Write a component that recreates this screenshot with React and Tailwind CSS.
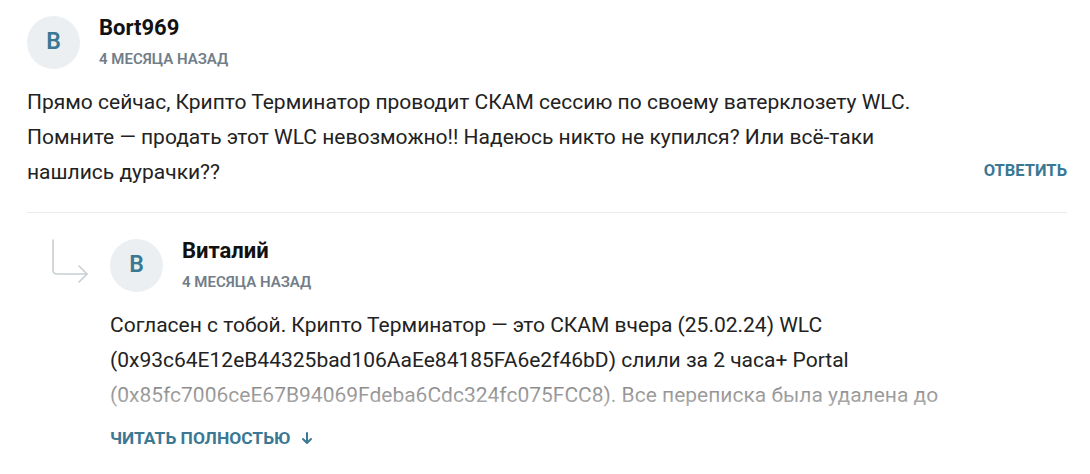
const Avatar = ({ letter }) => (
  <div className="w-[53px] h-[53px] shrink-0 rounded-full bg-[#eceff2] flex items-center justify-center">
    <span className="text-[23px] font-semibold text-[#3b7893]">{letter}</span>
  </div>
);

const Author = ({ name, date }) => (
  <div className="flex items-center">
    <Avatar letter="B" />
    <div className="ml-[19px] flex flex-col">
      <span className="text-[22px] leading-[26px] font-bold text-[#111]">{name}</span>
      <span className="mt-2 text-[15px] leading-[20px] font-semibold text-[#717d88]">
        {date}
      </span>
    </div>
  </div>
);

const ReplyArrow = () => (
  <svg width="40" height="46" viewBox="0 0 40 46" fill="none" stroke="#c8ced2" strokeWidth="1.6" strokeLinecap="round" strokeLinejoin="round">
    <path d="M2 1v30q0 4 4 4h30" />
    <path d="M28 27l8 8-8 8" />
  </svg>
);

export default function App() {
  return (
    <div className="w-[1090px] h-[474px] overflow-hidden bg-white pl-[27px] pr-[23px] pt-[15px] font-['Roboto',sans-serif] text-[#222]">
      <div className="pb-[22px] border-b border-[#ececec]">
        <Author name="Bort969" date="4 МЕСЯЦА НАЗАД" />
        <div className="mt-[16px] flex items-end gap-10">
          <p className="flex-1 text-[21px] leading-[35px]">
            Прямо сейчас, Крипто Терминатор проводит СКАМ сессию по своему ватерклозету WLC.
            Помните — продать этот WLC невозможно!! Надеюсь никто не купился? Или всё-таки
            нашлись дурачки??
          </p>
          <button className="mb-[6px] text-[16.5px] font-bold uppercase text-[#3b7893]">Ответить</button>
        </div>
      </div>

      <div className="flex pt-[25px]">
        <div className="w-[83px] shrink-0 pl-[24px] pt-[1px]">
          <ReplyArrow />
        </div>
        <div className="flex-1">
          <Author name="Виталий" date="4 МЕСЯЦА НАЗАД" />
          <div className="relative mt-[16px] max-h-[105px] overflow-hidden">
            <p className="text-[21px] leading-[35px]">
              Согласен с тобой. Крипто Терминатор — это СКАМ вчера (25.02.24) WLC
              (0x93c64E12eB44325bad106AaEe84185FA6e2f46bD) слили за 2 часа+ Portal
              (0x85fc7006ceE67B94069Fdeba6Cdc324fc075FCC8). Все переписка была удалена до
            </p>
            <div className="absolute inset-x-0 bottom-0 h-[35px] bg-gradient-to-b from-white/40 to-white/70" />
          </div>
          <button className="mt-[12px] flex items-center gap-[10px] text-[17.4px] font-bold uppercase text-[#3b7893]">
            Читать полностью
            <svg width="12" height="13" viewBox="0 0 12 13" fill="none" stroke="#3b7893" strokeWidth="2" strokeLinecap="round" strokeLinejoin="round">
              <path d="M6 1v10M2 7l4 4 4-4" />
            </svg>
          </button>
        </div>
      </div>
    </div>
  );
}
